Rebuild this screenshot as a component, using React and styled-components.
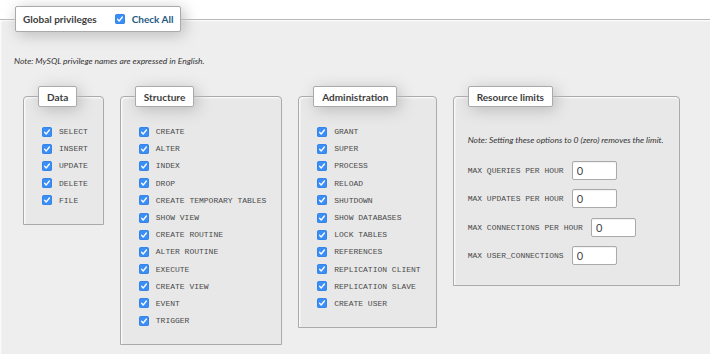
import React from 'react';
import styled, { createGlobalStyle } from 'styled-components';

const Global = createGlobalStyle`
  html, body { margin: 0; padding: 0; background: #fff; }
  body {
    width: 710px; height: 354px; overflow: hidden;
    font-family: Lato, "Open Sans", sans-serif; color: #444;
  }
`;

const Page = styled.form`
  padding-top: 6px;
`;

const OuterFieldset = styled.fieldset`
  margin: 0 -1px;
  padding: 24px 15px 15px;
  border: 1px solid #b8b8b8;
  background: #eee;
  box-shadow: inset 1px 1px 2px #fff;
  min-height: 400px;
  min-width: 0;
`;

const Legend = styled.legend`
  display: flex;
  align-items: center;
  box-sizing: border-box;
  height: ${p => p.$h}px;
  padding: 0 ${p => p.$pr}px 0 ${p => p.$pl}px;
  background: #fff;
  border: 1px solid #aaa;
  border-radius: 2px;
  box-shadow: 3px 3px 15px #bbb;
  font-size: 10px;
  font-weight: bold;
  color: #3d3d3d;
  white-space: nowrap;
`;

const CheckAllLabel = styled.span`
  display: flex;
  align-items: center;
  gap: 7px;
  margin-left: 18px;
  color: #235a81;
  font-size: 10px;
`;

const Note = styled.p`
  margin: ${p => p.$m};
  font-size: 8.5px;
  line-height: 10px;
  font-style: italic;
  color: #333;
  white-space: nowrap;
`;

const Groups = styled.div`
  display: flex;
  align-items: flex-start;
  gap: 16px;
  margin-top: 20px;
  padding-left: 8px;
`;

const Group = styled.fieldset`
  margin: 0;
  padding: 16px 15px 15px 14px;
  border: 1px solid #aaa;
  border-radius: 4px 4px 0 0;
  background: #e8e8e8;
  box-shadow: inset 1px 1px 2px #fff;
  min-width: 0;
`;

const CheckRow = styled.div`
  display: flex;
  align-items: center;
  height: 17.2px;
  gap: 7px;
  padding-left: 4px;
`;

const Box = styled.span`
  flex: none;
  display: inline-flex;
  width: 10px;
  height: 10px;
  border-radius: 2.5px;
  background: #3b8ef5;
  box-shadow: inset 0 0 0 0.5px #2f7de0;
`;

const Mono = styled.span`
  font-family: "Liberation Mono", "Courier New", monospace;
  font-size: 8px;
  color: #4a4a4a;
  white-space: pre;
`;

const LimitRow = styled.div`
  display: flex;
  align-items: center;
  height: 28.67px;
  gap: 8px;
`;

const Input = styled.input`
  box-sizing: border-box;
  width: 45px;
  height: 19px;
  margin: 0;
  padding: 0 0 0 4px;
  border: 1px solid #aaa;
  border-radius: 2px;
  background: #fff;
  box-shadow: inset 0 1px 1px rgba(0,0,0,0.06);
  font-family: Lato, "Open Sans", sans-serif;
  font-size: 11px;
  color: #444;
`;

const Checkbox = () => (
  <Box>
    <svg width="10" height="10" viewBox="0 0 10 10">
      <path d="M2.6 5.3 L4.2 7 L7.4 3" fill="none" stroke="#fff" strokeWidth="1.3" strokeLinecap="round" strokeLinejoin="round" />
    </svg>
  </Box>
);

const groups = [
  { title: 'Data', items: ['SELECT', 'INSERT', 'UPDATE', 'DELETE', 'FILE'] },
  {
    title: 'Structure',
    items: ['CREATE', 'ALTER', 'INDEX', 'DROP', 'CREATE TEMPORARY TABLES', 'SHOW VIEW', 'CREATE ROUTINE', 'ALTER ROUTINE', 'EXECUTE', 'CREATE VIEW', 'EVENT', 'TRIGGER'],
  },
  {
    title: 'Administration',
    items: ['GRANT', 'SUPER', 'PROCESS', 'RELOAD', 'SHUTDOWN', 'SHOW DATABASES', 'LOCK TABLES', 'REFERENCES', 'REPLICATION CLIENT', 'REPLICATION SLAVE', 'CREATE USER'],
  },
];

const limits = ['MAX QUERIES PER HOUR', 'MAX UPDATES PER HOUR', 'MAX CONNECTIONS PER HOUR', 'MAX USER_CONNECTIONS'];

export default function App() {
  return (
    <Page>
      <Global />
      <OuterFieldset>
        <Legend $h={26} $pl={7} $pr={7}>
          Global privileges
          <CheckAllLabel>
            <Checkbox />
            Check All
          </CheckAllLabel>
        </Legend>
        <Note $m="0 0 0 -1px">Note: MySQL privilege names are expressed in English.</Note>
        <Groups>
          {groups.map(g => (
            <Group key={g.title}>
              <Legend $h={21} $pl={8} $pr={8}>{g.title}</Legend>
              {g.items.map(it => (
                <CheckRow key={it}>
                  <Checkbox />
                  <Mono>{it}</Mono>
                </CheckRow>
              ))}
            </Group>
          ))}
          <Group>
            <Legend $h={21} $pl={8} $pr={8}>Resource limits</Legend>
            <Note $m="12px 0 10.7px 0">Note: Setting these options to 0 (zero) removes the limit.</Note>
            {limits.map(l => (
              <LimitRow key={l}>
                <Mono>{l}</Mono>
                <Input defaultValue="0" />
              </LimitRow>
            ))}
          </Group>
        </Groups>
      </OuterFieldset>
    </Page>
  );
}
